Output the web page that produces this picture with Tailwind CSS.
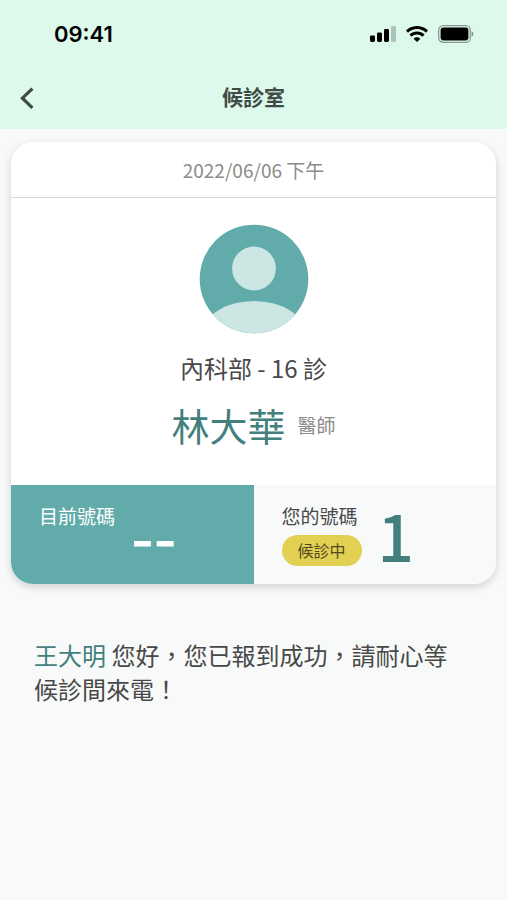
<!DOCTYPE html>
<html lang="zh-Hant">
<head>
<meta charset="utf-8">
<meta name="viewport" content="width=device-width, initial-scale=1">
<title>候診室</title>
<script src="https://cdn.jsdelivr.net/npm/@tailwindcss/browser@4"></script>
</head>
<body class="min-h-screen bg-[#f8faf9] font-['Noto_Sans_CJK_TC',sans-serif] text-[#484848]">
<header class="bg-[#ddf9ec]">
  <div class="flex h-[68px] items-center justify-between pl-[54px] pr-[33px]">
    <time class="font-['Inter',sans-serif] text-[22px] font-semibold leading-7 text-black">09:41</time>
    <div class="flex items-center gap-[10px]">
      <svg class="h-4 w-[26px]" viewBox="0 0 26 16" role="img" aria-label="訊號">
        <rect x="0" y="9.5" width="5" height="6.5" rx="1.4"/>
        <rect x="7" y="6.5" width="5" height="9.5" rx="1.4"/>
        <rect x="14" y="3" width="5" height="13" rx="1.4"/>
        <rect x="21" y="0" width="5" height="16" rx="1.4" opacity=".22"/>
      </svg>
      <svg class="h-4 w-[22px]" viewBox="0 0 22 16" role="img" aria-label="無線網路">
        <g fill="none" stroke="#000" stroke-width="3">
          <path d="M1 5.6a14.2 14.2 0 0 1 20 0"/>
          <path d="M4.5 9.6a9.2 9.2 0 0 1 13 0"/>
        </g>
        <path d="M11 16 7.6 12.7a4.8 4.8 0 0 1 6.8 0Z"/>
      </svg>
      <svg class="h-[18px] w-[36px]" viewBox="0 0 36 18" role="img" aria-label="電池">
        <rect x=".7" y=".7" width="31.6" height="16.6" rx="4.6" fill="none" stroke="#000" stroke-opacity=".38" stroke-width="1.3"/>
        <rect x="2.6" y="2.6" width="27.8" height="12.8" rx="2.8"/>
        <path d="M33.6 6.3v5.4c1.1-.5 1.8-1.5 1.8-2.7s-.7-2.2-1.8-2.7Z" opacity=".42"/>
      </svg>
    </div>
  </div>
  <div class="grid h-[61px] grid-cols-[1fr_auto_1fr] items-start px-5 pt-3">
    <button type="button" aria-label="返回" class="flex h-9 items-center justify-self-start text-[#3d4a45]">
      <svg class="h-[22px] w-[14px]" viewBox="0 0 14 22" fill="none" stroke="currentColor" stroke-width="3.2"><path d="M12.4 1.6 2.4 11.2l10 9.6"/></svg>
    </button>
    <h1 class="text-[21px] font-bold leading-8 text-[#3f4b46]">候診室</h1>
  </div>
</header>
<main class="px-[11px] pt-[13px]">
  <section class="overflow-hidden rounded-[22px] bg-white shadow-[0_3px_8px_rgba(0,0,0,0.16)]">
    <p class="border-b-1 border-[#d4dad8] pb-[13px] pt-[14px] text-center text-[19px] leading-7 text-[#8b8b8b]">2022/06/06 下午</p>
    <div class="flex flex-col items-center pb-9 pt-[26px]">
      <svg class="size-[110px]" viewBox="0 0 110 110" role="img" aria-label="醫師頭像">
        <defs><clipPath id="face"><circle cx="55" cy="55" r="54.3"/></clipPath></defs>
        <circle cx="55" cy="55" r="54.3" fill="#61abaa"/>
        <circle cx="55" cy="44.5" r="21.9" fill="#cce6e4"/>
        <ellipse cx="55" cy="111" rx="52" ry="34" fill="#cce6e4" clip-path="url(#face)"/>
      </svg>
      <p class="mt-4 text-[24px] leading-9">內科部 - 16 診</p>
      <h2 class="mt-[15px] flex items-center gap-3 text-[38px] font-normal leading-[48px] text-[#427f7d]">林大華 <span class="text-[19px] leading-7 text-[#8b8b8b]">醫師</span></h2>
    </div>
    <dl class="grid grid-cols-2">
      <div class="flex h-[99px] gap-4 bg-[#61abaa] pl-7 pt-4 text-white">
        <dt class="text-[19px] leading-[30px]">目前號碼</dt>
        <dd class="text-[64px] font-medium leading-[66px]">--</dd>
      </div>
      <div class="flex h-[99px] gap-4 bg-[#f8faf9] pl-7 pt-4">
        <dt class="text-[19px] leading-[30px]">您的號碼
          <span class="mt-1 block rounded-full bg-[#e2d052] px-4 text-center text-[16px] leading-[31px] text-[#51471f]">候診中</span>
        </dt>
        <dd class="text-[64px] font-medium leading-[66px] text-[#427f7d]">1</dd>
      </div>
    </dl>
  </section>
  <p class="pl-[23px] pr-9 pt-[54px] text-[24px] leading-[34px]"><span class="text-[#427f7d]">王大明</span> 您好，您已報到成功，請耐心等候診間來電！</p>
</main>
</body>
</html>
